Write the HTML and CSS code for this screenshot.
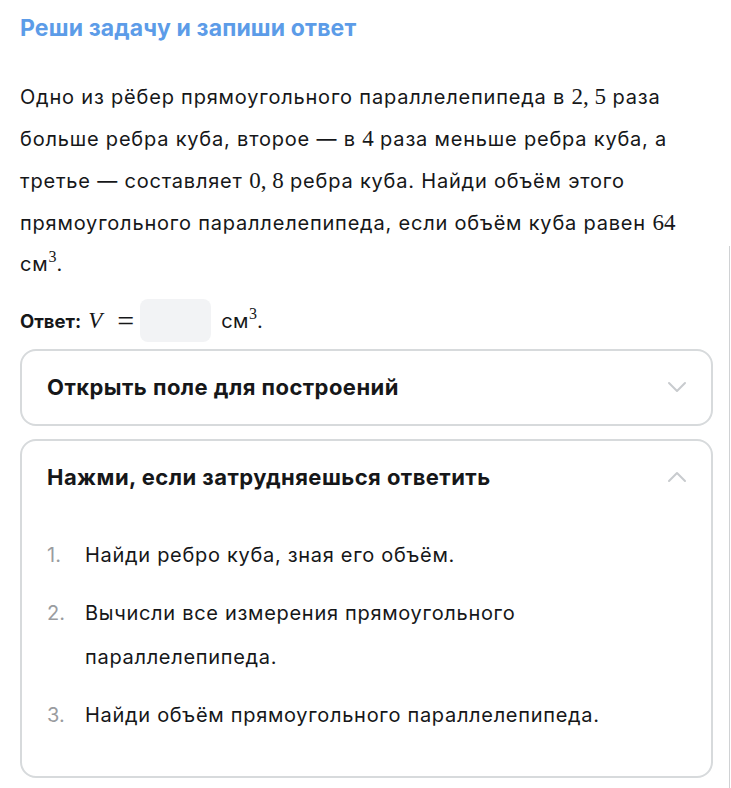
FILE: index.html
```html
<!DOCTYPE html>
<html lang="ru">
<head>
<meta charset="utf-8">
<link rel="stylesheet" href="styles.css">
</head>
<body>
<div class="page">
  <h1 class="title">Реши задачу и запиши ответ</h1>
  <p class="task">Одно из рёбер прямоугольного параллелепипеда в <span class="m">2,&nbsp;5</span> раза больше ребра куба, второе — в <span class="m">4</span> раза меньше ребра куба, а третье — составляет <span class="m">0,&nbsp;8</span> ребра куба. Найди объём этого прямоугольного параллелепипеда, если объём куба равен <span class="m">64</span> см<sup class="m">3</sup>.</p>
  <div class="answer">
    <span class="answer-label">Ответ:</span>
    <span class="m mi">V</span>
    <span class="m eq">=</span>
    <span class="input"></span>
    <span class="unit">см<sup class="m">3</sup>.</span>
  </div>
  <div class="card">
    <div class="card-head">
      <span class="card-title">Открыть поле для построений</span>
      <svg class="chev" width="20" height="12" viewBox="0 0 20 12"><path d="M2 2 L10 10 L18 2" fill="none" stroke="#c8cbce" stroke-width="2" stroke-linecap="round" stroke-linejoin="round"/></svg>
    </div>
  </div>
  <div class="card">
    <div class="card-head">
      <span class="card-title">Нажми, если затрудняешься ответить</span>
      <svg class="chev" width="20" height="12" viewBox="0 0 20 12"><path d="M2 10 L10 2 L18 10" fill="none" stroke="#c8cbce" stroke-width="2" stroke-linecap="round" stroke-linejoin="round"/></svg>
    </div>
    <ol class="hints">
      <li><span class="num">1.</span><span class="txt">Найди ребро куба, зная его объём.</span></li>
      <li><span class="num">2.</span><span class="txt">Вычисли все измерения прямоугольного параллелепипеда.</span></li>
      <li><span class="num">3.</span><span class="txt">Найди объём прямоугольного параллелепипеда.</span></li>
    </ol>
  </div>
</div>
<div class="edge"></div>
</body>
</html>
```
FILE: styles.css
```css
html, body {
  margin: 0;
  padding: 0;
  background: #ffffff;
}
body {
  font-family: Inter, Roboto, "Noto Sans", sans-serif;
  color: #161719;
  width: 731px;
  height: 788px;
  overflow: hidden;
  position: relative;
}
.page {
  padding: 14px 18px 0 20px;
}
.title {
  margin: 0;
  font-size: 23px;
  line-height: 28px;
  font-weight: 700;
  letter-spacing: 0.15px;
  color: #5c9ce8;
}
.task {
  margin: 34px 0 0;
  font-size: 20px;
  line-height: 41px;
  letter-spacing: 0.8px;
  padding-right: 20px;
}
.m {
  font-family: "Liberation Serif", "DejaVu Serif", serif;
  font-size: 23px;
  letter-spacing: 0;
}
sup.m {
  font-size: 16px;
  line-height: 0;
  vertical-align: 0.55em;
}
.answer {
  margin-top: 13px;
  display: flex;
  align-items: center;
  height: 45px;
  font-size: 20px;
}
.answer-label {
  font-weight: 700;
  font-size: 18.5px;
  margin-right: 7px;
}
.mi {
  font-style: italic;
  margin-right: 15px;
}
.eq {
  font-size: 30px;
  line-height: 1;
  margin-right: 6px;
}
.input {
  width: 71px;
  height: 43px;
  border-radius: 8px;
  background: #f2f3f5;
  margin-right: 10px;
}
.unit {
  letter-spacing: 0.5px;
}
.card {
  margin-top: 6px;
  border: 2px solid #d7dadc;
  border-radius: 16px;
}
.card + .card {
  margin-top: 13px;
}
.card-head {
  display: flex;
  align-items: center;
  justify-content: space-between;
  padding: 22px 24px 23px 25px;
}
.card-title {
  font-size: 22px;
  line-height: 28px;
  font-weight: 700;
  letter-spacing: 0.45px;
}
.chev {
  display: block;
}
.hints {
  list-style: none;
  margin: 19px 0 0;
  padding: 0 60px 39px 25px;
}
.hints li {
  display: flex;
  font-size: 20px;
  line-height: 44px;
  letter-spacing: 0.7px;
}
.hints li + li {
  margin-top: 14px;
}
.num {
  width: 38px;
  flex: none;
  color: #9a9ca0;
  letter-spacing: 0;
}
.edge {
  position: absolute;
  right: 1px;
  top: 246px;
  bottom: 0;
  width: 1px;
  background: #d0d2d4;
}
```
